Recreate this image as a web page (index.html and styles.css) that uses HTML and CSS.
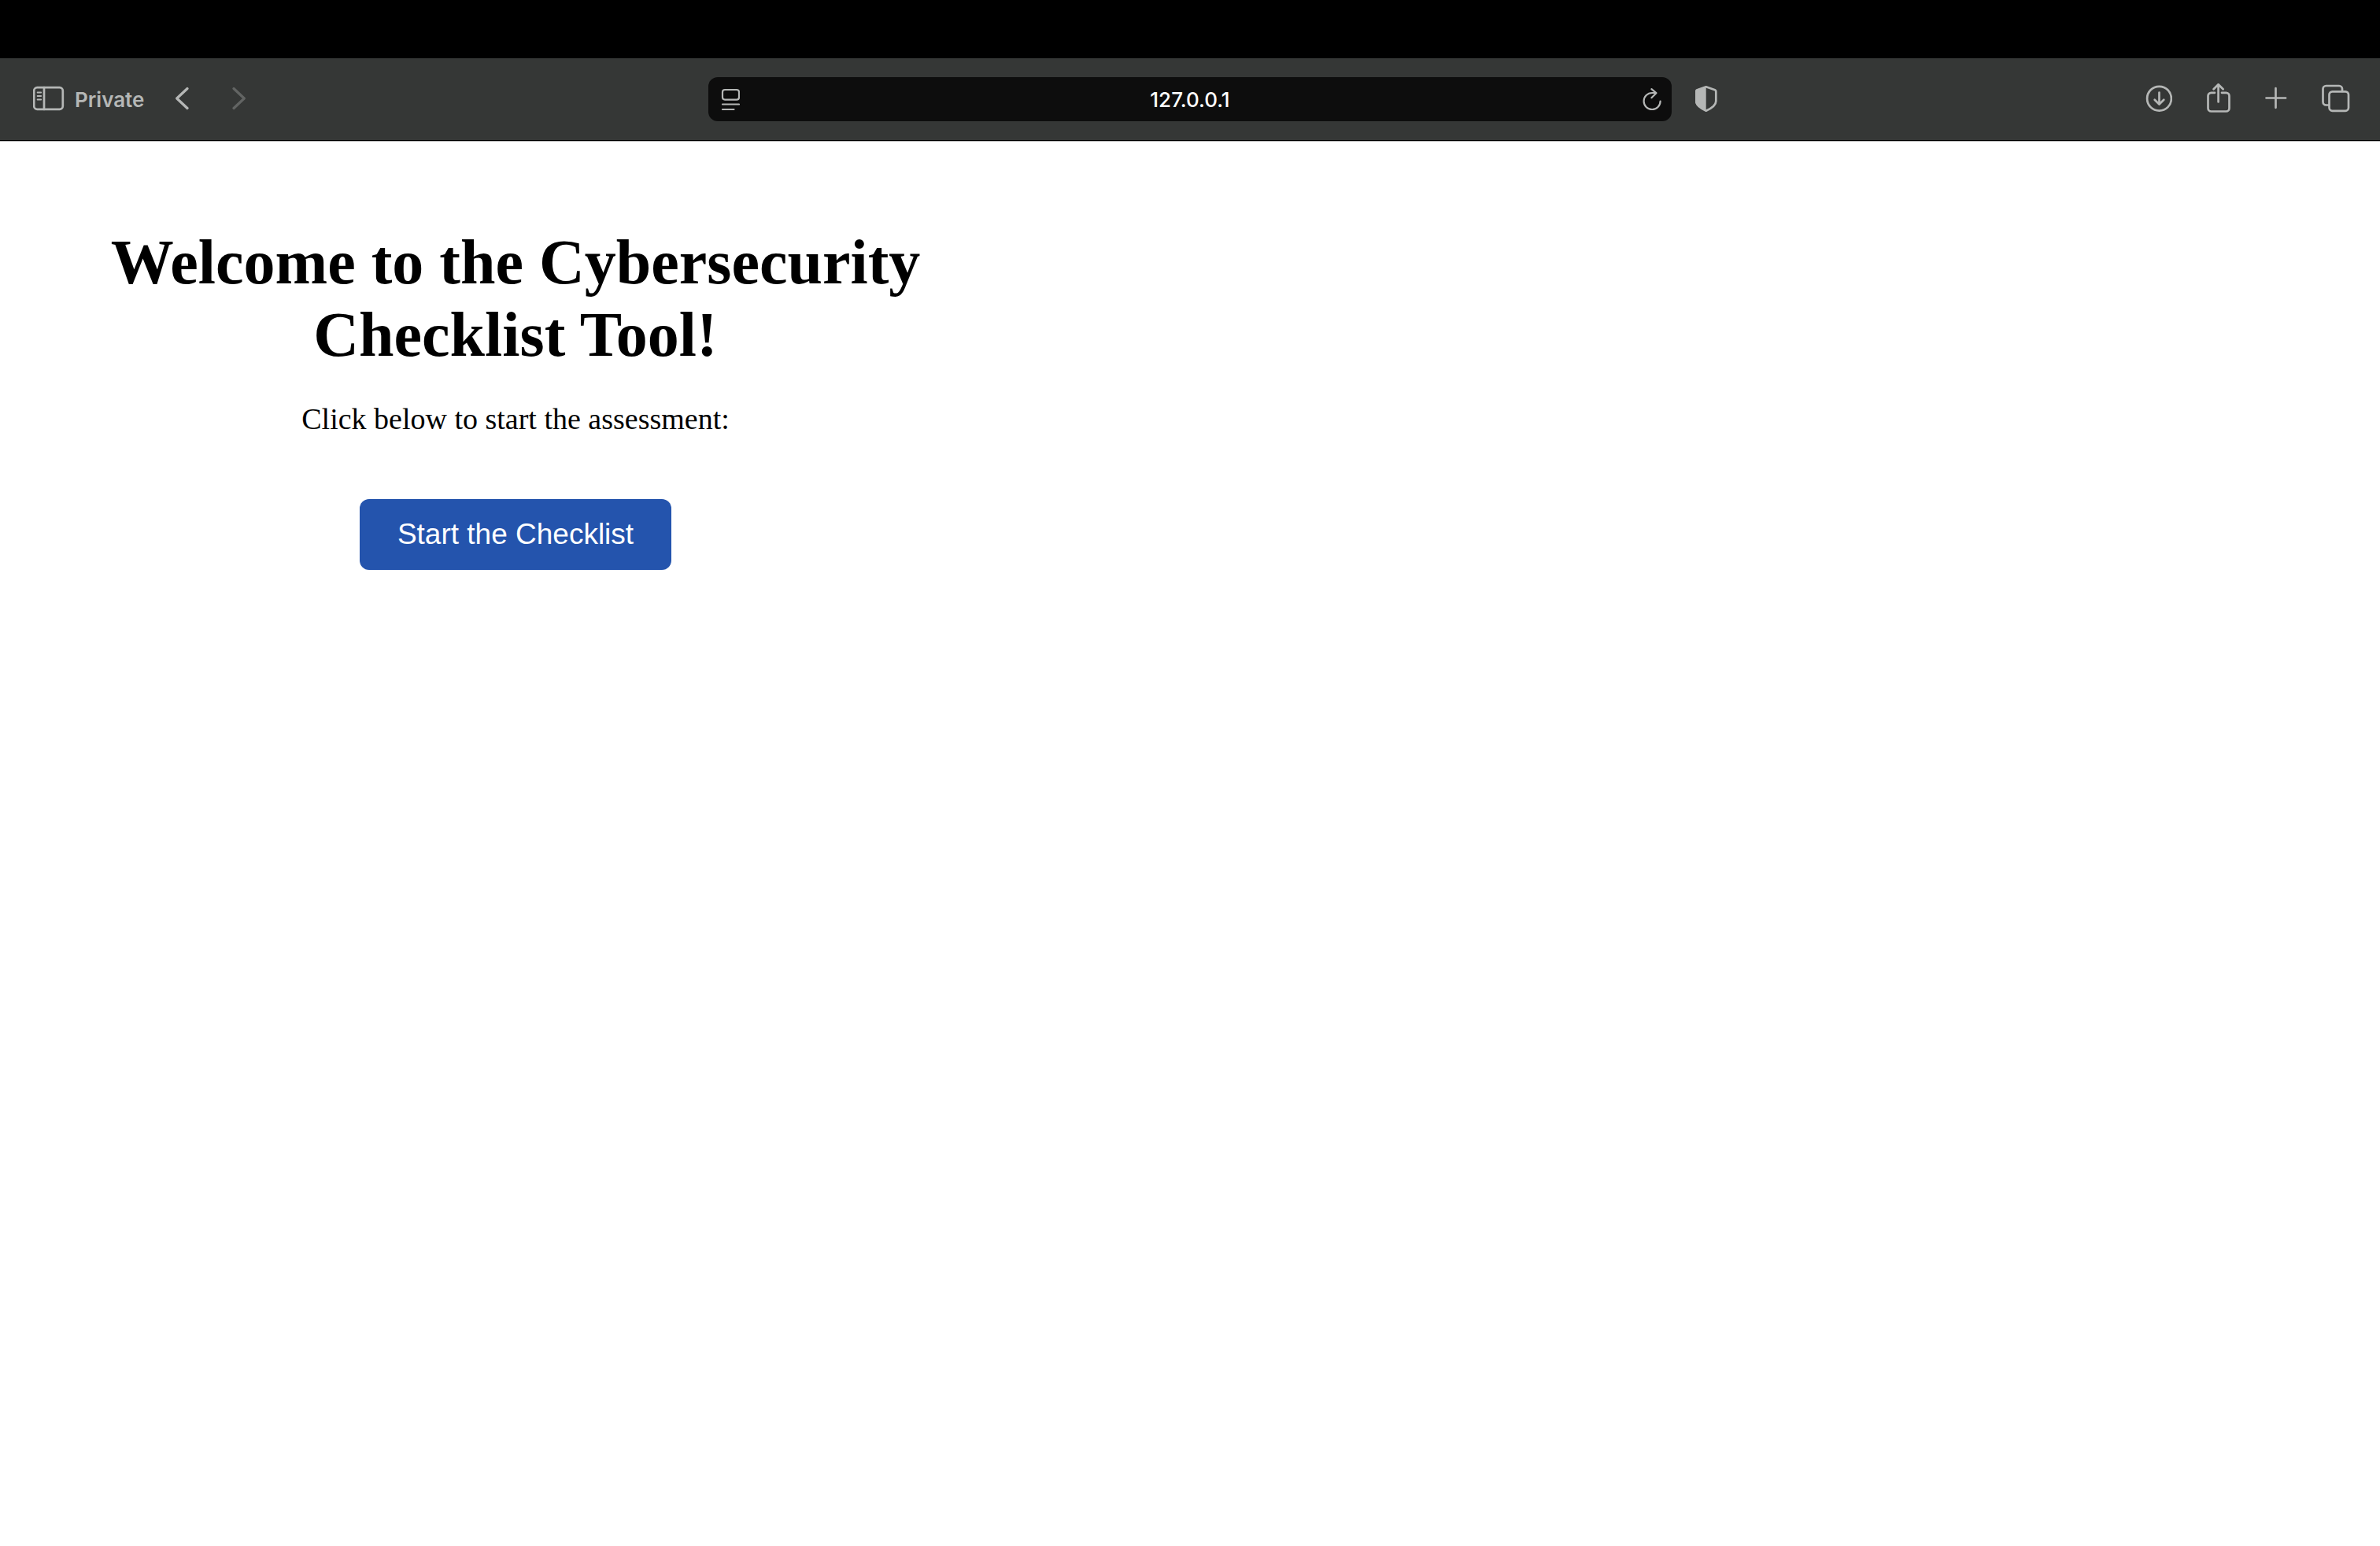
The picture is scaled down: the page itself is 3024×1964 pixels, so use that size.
FILE: index.html
```html
<!DOCTYPE html>
<html lang="en">
<head>
<meta charset="utf-8">
<title>Cybersecurity Checklist Tool</title>
<link rel="stylesheet" href="styles.css">
</head>
<body>
<header class="browser">
  <div class="toolbar">
    <div class="nav">
      <button class="tool tool-private" type="button">
        <svg class="icon" width="40" height="40" viewBox="0 0 40 40" aria-hidden="true"><rect x="1.2" y="5.2" width="36.6" height="27.6" rx="4"/><path d="M14 5v28"/><path class="thin" d="M5.6 11.5h4.6M5.6 16h4.6M5.6 20.500h4.600"/></svg>
        <span>Private</span>
      </button>
      <button class="tool" type="button" aria-label="Back"><svg class="icon" width="18" height="40" viewBox="0 0 18 40"><path class="bold" d="M15 6.500 1.700 19 15 31.500"/></svg></button>
      <button class="tool" type="button" aria-label="Forward" disabled><svg class="icon" width="18" height="40" viewBox="0 0 18 40"><path class="bold" d="M2 6.500 15.300 19 2 31.500"/></svg></button>
    </div>
    <form class="address">
      <button class="tool" type="button" aria-label="Page menu"><svg class="icon" width="24" height="40" viewBox="0 0 24 40"><rect class="fine" x="2" y="8" width="21" height="12.600" rx="3"/><path class="fine" d="M2 26.500h21M2 33h14.500"/></svg></button>
      <input class="url" type="text" value="127.0.0.1" aria-label="Address">
      <button class="tool" type="button" aria-label="Reload"><svg class="icon" width="28" height="40" viewBox="-4 0 28 40"><path class="fine" d="M21.600 22.500a10.500 10.500 0 1 1-10.500-10.500h5"/><path class="fine" d="m10.400 7.200 6 5-6 6"/></svg></button>
    </form>
    <div class="actions">
      <button class="tool" type="button" aria-label="Privacy report"><svg class="icon" width="28" height="40" viewBox="0 0 28 40"><path d="M13.700 4.300 25 8.300c1 .4 1.300 1 1.300 2v12.200c0 5-4.300 8.500-12.600 12.200C5.400 31 1.200 27.500 1.200 22.500V10.300c0-1 .3-1.600 1.300-2z"/><path class="solid" d="M13.700 3.500v32C5 31.500 0 28 0 22.500v-12C0 9 .6 8 2 7.500z"/></svg></button>
      <div class="actions-end">
        <button class="tool" type="button" aria-label="Downloads"><svg class="icon" width="34" height="40" viewBox="0 0 34 40"><circle cx="17.500" cy="19.200" r="15.400"/><path d="M17.500 11.500v14.500M11.700 20.700l5.800 5.800 5.800-5.800"/></svg></button>
        <button class="tool" type="button" aria-label="Share"><svg class="icon" width="30" height="40" viewBox="0 0 30 40"><path d="M10 11.800H5.500a4 4 0 0 0-4 4V31.500a4 4 0 0 0 4 4h19a4 4 0 0 0 4-4V15.800a4 4 0 0 0-4-4H19M14.600 23.500V1.800M8.600 7.200l6-6 6 6"/></svg></button>
        <button class="tool" type="button" aria-label="New tab"><svg class="icon" width="28" height="40" viewBox="0 0 28 40"><path d="M1.500 18.500h24.600M13.500 6.200v24.600"/></svg></button>
        <button class="tool" type="button" aria-label="Tab overview"><svg class="icon" width="36" height="40" viewBox="0 0 36 40"><rect x="9.500" y="10.300" width="24.500" height="24.500" rx="4"/><path d="M9 27.500H5.500a4 4 0 0 1-4-4V7a4 4 0 0 1 4-4H22a4 4 0 0 1 4 4v3"/></svg></button>
      </div>
    </div>
  </div>
</header>
<main class="page">
  <h1 class="title">Welcome to the Cybersecurity Checklist Tool!</h1>
  <p class="lead">Click below to start the assessment:</p>
  <button class="start" type="button">Start the Checklist</button>
</main>
</body>
</html>
```
FILE: styles.css
```css
* {
  box-sizing: border-box;
}

body {
  margin: 0;
  background: #fff;
  color: #000;
  font-family: "Liberation Serif", "Times New Roman", serif;
}

.browser {
  border-top: 74px solid #000;
  border-bottom: 1px solid #b9b9b9;
  font-family: Inter, sans-serif;
  font-size: 26px;
}

.toolbar {
  display: grid;
  grid-template-columns: 1fr minmax(0, 1224px) 1fr;
  align-items: center;
  height: 105px;
  border-bottom: 1px solid #000;
  background: #353736;
}

.nav {
  display: flex;
  align-items: center;
  gap: 54px;
  padding-left: 42px;
}

.tool {
  display: flex;
  align-items: center;
  padding: 0;
  border: 0;
  background: none;
  color: #b5b7b6;
  font: inherit;
}

.tool:disabled {
  color: #626463;
}

.tool-private {
  gap: 13px;
  margin-right: -14px;
  font-weight: 600;
}

.icon {
  display: block;
  fill: none;
  stroke: currentColor;
  stroke-width: 2.7;
  stroke-linecap: round;
  stroke-linejoin: round;
}

.thin {
  stroke-width: 1.8;
}

.fine {
  stroke-width: 2.2;
}

.bold {
  stroke-width: 3.2;
}

.solid {
  fill: currentColor;
  stroke: none;
}

.address {
  display: flex;
  align-items: center;
  height: 56px;
  padding: 0 12px 0 16px;
  border-radius: 12px;
  background: #0d0d0d;
}

.url {
  flex: 1;
  min-width: 0;
  padding: 0;
  border: 0;
  background: none;
  color: #fff;
  font: inherit;
  font-weight: 500;
  text-align: center;
}

.actions {
  display: flex;
  justify-content: space-between;
  padding: 0 38px 0 30px;
}

.actions-end {
  display: flex;
  gap: 44px;
}

.page {
  display: flex;
  flex-direction: column;
  align-items: center;
  max-width: 1200px;
  margin-left: 55px;
  padding-top: 107px;
  text-align: center;
}

.title {
  margin: 0 0 38px;
  font-size: 80px;
  line-height: 92px;
}

.lead {
  margin: 0 0 79px;
  font-size: 38px;
  line-height: 46px;
}

.start {
  padding: 22px 48px;
  border: 0;
  border-radius: 12px;
  background: #2454ad;
  color: #fff;
  font-family: "Liberation Sans", Arial, sans-serif;
  font-size: 37px;
  line-height: 46px;
}
```
